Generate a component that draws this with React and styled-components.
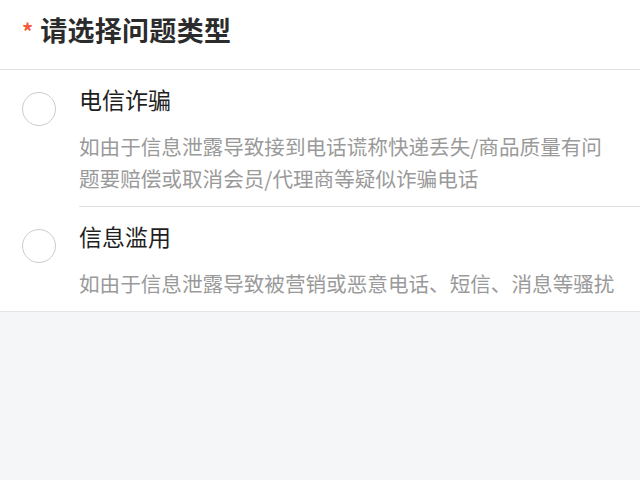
import React from "react";
import styled, { createGlobalStyle } from "styled-components";

const Global = createGlobalStyle`
  html, body { margin: 0; padding: 0; background: #f5f6f8; }
  body { font-family: "Noto Sans CJK SC", "Noto Sans", sans-serif; }
  * { box-sizing: border-box; }
`;

const Page = styled.div`
  width: 640px;
  height: 480px;
  background: #f5f6f8;
`;

const Panel = styled.div`
  background: #ffffff;
  border-bottom: 1px solid #e4e4e6;
`;

const Header = styled.div`
  height: 70px;
  display: flex;
  align-items: center;
  padding: 0 0 9px 22px;
  border-bottom: 1px solid #e2e2e2;
`;

const Star = styled.span`
  color: #f25a3c;
  font-size: 22px;
  font-weight: 700;
  margin-right: 7px;
  margin-top: 0px;
  line-height: 1;
`;

const Title = styled.h1`
  margin: 0;
  font-size: 27px;
  font-weight: 700;
  color: #2b2b2b;
  letter-spacing: 0.3px;
  line-height: 34px;
`;

const Option = styled.label`
  display: flex;
  align-items: flex-start;
  padding-left: 22px;
`;

const Radio = styled.span`
  flex: none;
  width: 34px;
  height: 34px;
  border-radius: 50%;
  border: 1.5px solid #cccccc;
  margin-top: 22px;
  margin-right: 23px;
`;

const Body = styled.div`
  flex: 1;
  padding: 15px 20px 12px 0;
  border-bottom: ${(p) => (p.$last ? "none" : "1px solid #e2e2e2")};
`;

const OptTitle = styled.div`
  font-size: 23px;
  line-height: 28px;
  color: #1f1f1f;
`;

const Desc = styled.div`
  margin-top: 17px;
  font-size: 20.6px;
  line-height: 32px;
  color: #9a9a9a;
`;

const options = [
  {
    title: "电信诈骗",
    desc: "如由于信息泄露导致接到电话谎称快递丢失/商品质量有问题要赔偿或取消会员/代理商等疑似诈骗电话",
  },
  {
    title: "信息滥用",
    desc: "如由于信息泄露导致被营销或恶意电话、短信、消息等骚扰",
  },
];

export default function App() {
  return (
    <Page>
      <Global />
      <Panel>
        <Header>
          <Star>*</Star>
          <Title>请选择问题类型</Title>
        </Header>
        {options.map((o, i) => (
          <Option key={o.title}>
            <Radio />
            <Body $last={i === options.length - 1}>
              <OptTitle>{o.title}</OptTitle>
              <Desc>{o.desc}</Desc>
            </Body>
          </Option>
        ))}
      </Panel>
    </Page>
  );
}
